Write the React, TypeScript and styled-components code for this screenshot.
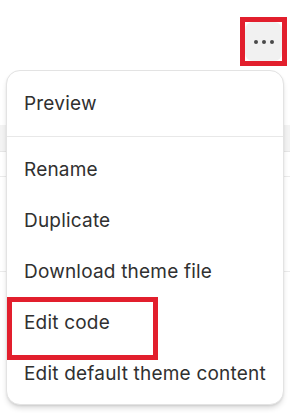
import React from 'react';
import styled, { createGlobalStyle } from 'styled-components';

const GlobalStyle = createGlobalStyle`
  html, body {
    margin: 0;
    padding: 0;
    background: #ffffff;
    font-family: Inter, "Noto Sans", "Liberation Sans", sans-serif;
  }
  * {
    box-sizing: border-box;
  }
`;

const HIGHLIGHT = '#e21f2d';

const menuSections = [
  { key: 'primary', items: ['Preview'] },
  {
    key: 'actions',
    items: [
      'Rename',
      'Duplicate',
      'Download theme file',
      'Edit code',
      'Edit default theme content',
    ],
  },
];

export default function App() {
  return (
    <Page>
      <GlobalStyle />

      <TopBar>
        <RedFrame>
          <MoreButton aria-label="More actions">
            <Dot />
            <Dot />
            <Dot />
          </MoreButton>
        </RedFrame>
      </TopBar>

      {/* table underneath the open menu */}
      <Table>
        <HeaderRow />
        <Row $height={25} />
        <Row $height={95} />
      </Table>

      <Menu role="menu">
        {menuSections.map((section, i) => (
          <Section key={section.key} $first={i === 0}>
            {section.items.map((label) => (
              <Item key={label} role="menuitem" $outlined={label === 'Edit code'}>
                {label}
              </Item>
            ))}
          </Section>
        ))}
      </Menu>
    </Page>
  );
}

const Page = styled.div`
  position: relative;
  width: 290px;
  height: 413px;
  overflow: hidden;
  background: #ffffff;
`;

const TopBar = styled.div`
  display: flex;
  justify-content: flex-end;
  align-items: flex-start;
  height: 70px;
  padding: 17px 3px 0 0;
`;

const RedFrame = styled.div`
  display: flex;
  border: 5px solid ${HIGHLIGHT};
`;

const MoreButton = styled.button`
  display: flex;
  align-items: center;
  justify-content: center;
  gap: 4px;
  width: 37px;
  height: 39px;
  padding: 0;
  border: none;
  border-radius: 8px;
  background: #f1f1f1;
  cursor: pointer;
`;

const Dot = styled.span`
  width: 4px;
  height: 4px;
  border-radius: 50%;
  background: #4a4a4a;
`;

const Table = styled.div`
  display: flex;
  flex-direction: column;
  margin-top: 55px;
`;

const HeaderRow = styled.div`
  height: 27px;
  background: #f3f3f3;
  border-bottom: 1px solid #e6e6e6;
`;

const Row = styled.div<{ $height: number }>`
  height: ${(p) => p.$height}px;
  border-bottom: 1px solid #ebebeb;
`;

const Menu = styled.div`
  position: absolute;
  top: 70px;
  left: 6px;
  width: 278px;
  background: #ffffff;
  border: 1px solid #e3e3e3;
  border-radius: 14px;
  box-shadow: 0 4px 6px -2px rgba(0, 0, 0, 0.2), 0 1px 2px rgba(0, 0, 0, 0.06);
`;

const Section = styled.div<{ $first: boolean }>`
  display: flex;
  flex-direction: column;
  padding: ${(p) => (p.$first ? '7px 0 7px' : '7px 0 5px')};
  border-top: ${(p) => (p.$first ? 'none' : '1px solid #e8e8e8')};
`;

const Item = styled.div<{ $outlined: boolean }>`
  position: relative;
  display: flex;
  align-items: center;
  height: 51px;
  padding-left: 17px;
  font-size: 19px;
  letter-spacing: 0.2px;
  color: #303030;
  white-space: nowrap;
  cursor: pointer;

  &::after {
    content: '';
    display: ${(p) => (p.$outlined ? 'block' : 'none')};
    position: absolute;
    top: 0;
    left: 0;
    width: 141px;
    height: 53px;
    border: 5px solid ${HIGHLIGHT};
  }
`;
